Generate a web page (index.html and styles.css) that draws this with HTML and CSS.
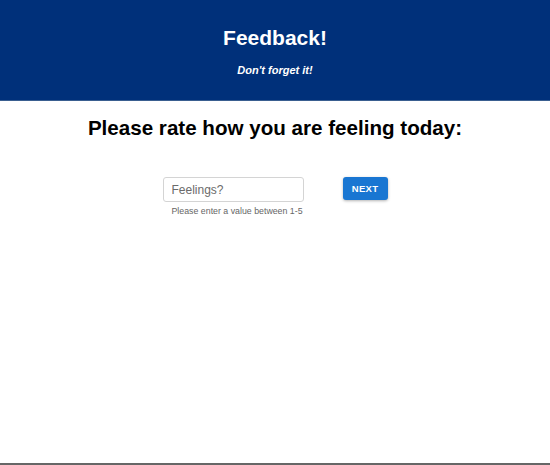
FILE: index.html
```html
<!DOCTYPE html>
<html>
<head>
<meta charset="utf-8">
<link rel="stylesheet" href="styles.css">
</head>
<body>
<div class="page">
  <header class="hero">
    <h1 class="hero-title">Feedback!</h1>
    <p class="hero-sub">Don't forget it!</p>
  </header>
  <main class="content">
    <h2 class="question">Please rate how you are feeling today:</h2>
    <form class="form">
      <div class="field">
        <input class="input" type="text" placeholder="Feelings?">
        <span class="hint">Please enter a value between 1-5</span>
      </div>
      <button class="btn" type="button">NEXT</button>
    </form>
  </main>
</div>
</body>
</html>
```
FILE: styles.css
```css
html, body {
  margin: 0;
  padding: 0;
  background: #fff;
}
body {
  font-family: "Liberation Sans", Arial, sans-serif;
}
.page {
  height: 463px;
  border-bottom: 2px solid #666;
  display: flex;
  flex-direction: column;
}
.hero {
  background: #00307a;
  height: 101px;
  border-bottom: 1px solid #3a5f90;
  box-sizing: border-box;
  display: flex;
  flex-direction: column;
  align-items: center;
  padding-top: 26px;
}
.hero-title {
  margin: 0;
  color: #fff;
  font-size: 21px;
  font-weight: bold;
  line-height: 24px;
}
.hero-sub {
  margin: 14px 0 0;
  color: #fff;
  font-size: 11px;
  font-weight: bold;
  font-style: italic;
  line-height: 13px;
}
.content {
  display: flex;
  flex-direction: column;
  align-items: center;
}
.question {
  margin: 13px 0 0;
  font-size: 20.6px;
  font-weight: bold;
  line-height: 28px;
  color: #000;
}
.form {
  margin-top: 35px;
  display: flex;
  align-items: flex-start;
  gap: 39px;
}
.field {
  display: flex;
  flex-direction: column;
}
.input {
  width: 141px;
  height: 25px;
  box-sizing: border-box;
  border: 1px solid #d4d4d4;
  border-radius: 3px;
  padding: 0 8px;
  font-family: "Liberation Sans", Arial, sans-serif;
  font-size: 12px;
  color: #333;
  outline: none;
}
.input::placeholder {
  color: #6b6b6b;
}
.hint {
  margin-top: 4px;
  padding-left: 9px;
  font-size: 8.8px;
  color: #666;
}
.btn {
  width: 45px;
  height: 23px;
  border: none;
  border-radius: 3px;
  background: #1976d2;
  color: #fff;
  font-family: "Liberation Sans", Arial, sans-serif;
  font-size: 9.5px;
  font-weight: bold;
  letter-spacing: 0.3px;
  box-shadow: 0 1px 3px rgba(0,0,0,0.3);
  padding: 0;
}
```
